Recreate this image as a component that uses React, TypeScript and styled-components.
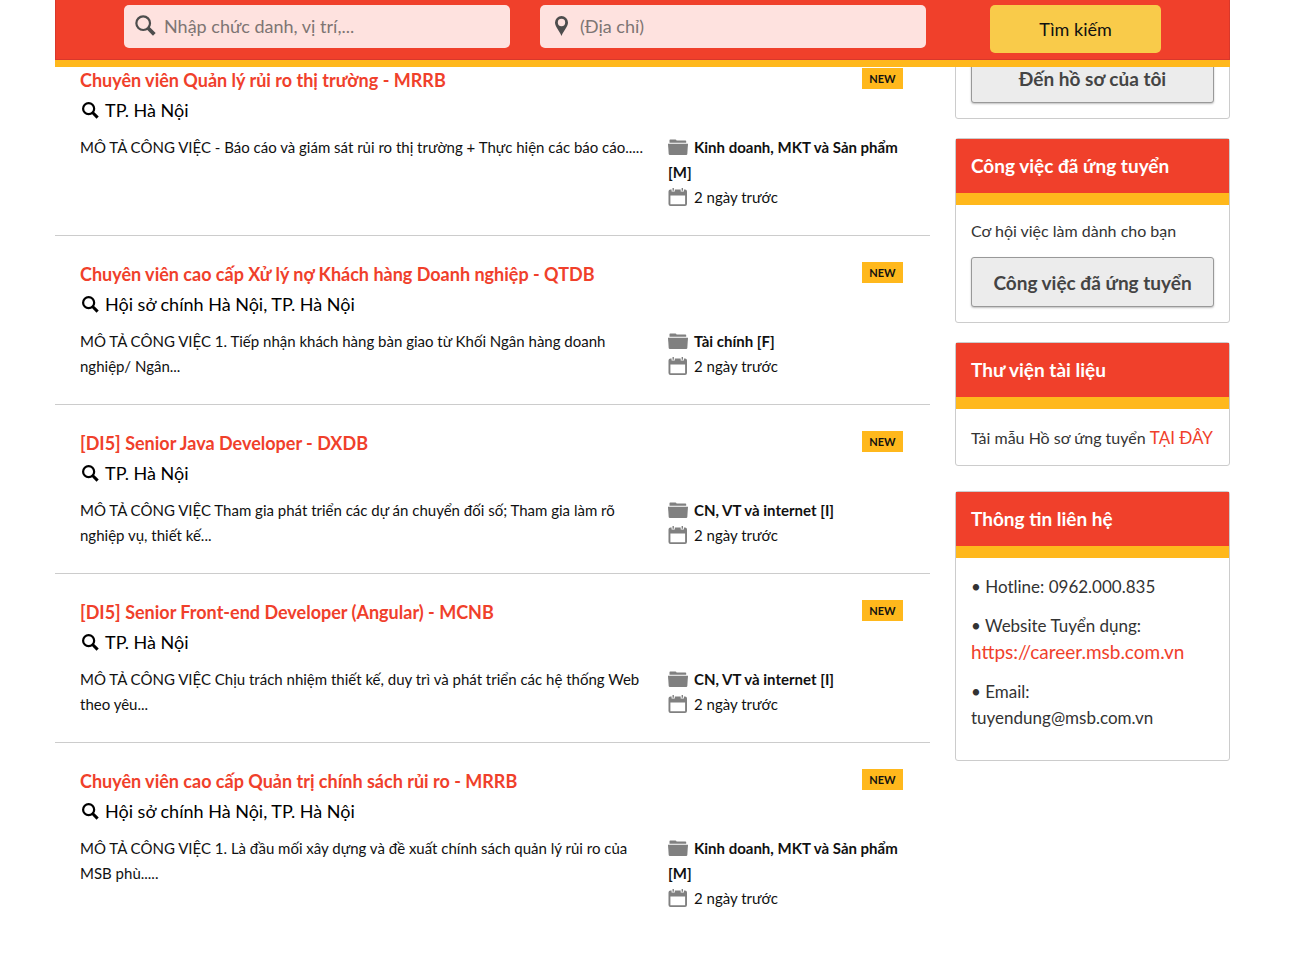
import React from "react";
import styled, { createGlobalStyle } from "styled-components";

const red = "#f0402b";
const amber = "#ffb81c";

const GlobalStyle = createGlobalStyle`
  * { box-sizing: border-box; }
  body {
    margin: 0;
    padding: 0 17px 0 0;
    background: #fff;
    color: #111;
    font-family: Lato, "Noto Sans", sans-serif;
    font-size: 15px;
    line-height: 25px;
  }
  h2, h3, p { margin: 0; padding: 0; font-weight: 400; }
  a { color: ${red}; text-decoration: none; }
`;

const Page = styled.div`
  max-width: 1175px;
  margin: 0 auto;
`;

const SearchBar = styled.form`
  position: sticky;
  top: 0;
  z-index: 2;
  display: grid;
  grid-template-columns: 386px 386px 171px;
  justify-content: start;
  column-gap: 30px;
  height: 67px;
  padding: 5px 69px 0;
  background: ${red};
  border-bottom: 7px solid ${amber};
  box-shadow: inset 0 -1px #d8382a, inset 1px 0 #d8382a, inset -1px 0 #d8382a;
`;

const Field = styled.label`
  display: flex;
  align-items: center;
  height: 43px;
  padding: 0 11px 2px;
  border-radius: 5px;
  background: #fee2df;
  color: #4d4d4d;
`;

const FieldInput = styled.input`
  flex: 1;
  min-width: 0;
  padding: 0;
  margin-left: 8px;
  border: 0;
  outline: 0;
  background: transparent;
  color: #333;
  font: 18px Lato, "Noto Sans", sans-serif;
  &::placeholder { color: #7d7573; opacity: 1; }
`;

const SubmitButton = styled.button`
  height: 48px;
  margin-left: 34px;
  width: 171px;
  border: 0;
  border-radius: 5px;
  background: #f9cb4a;
  color: #111;
  font: 18px Lato, "Noto Sans", sans-serif;
`;

const Columns = styled.div`
  display: grid;
  grid-template-columns: minmax(0, 1fr) 275px;
  column-gap: 25px;
  align-items: start;
  margin-top: -25px;
`;

const JobList = styled.main``;

const JobItem = styled.article`
  display: grid;
  grid-template-columns: minmax(0, 1fr) 235px;
  column-gap: 15px;
  padding: 23px 27px 25px 25px;
  border-bottom: 1px solid #ccc;
  &:last-child { border-bottom: 0; }
`;

const JobHead = styled.div`
  grid-column: 1 / -1;
  display: flex;
  justify-content: space-between;
  align-items: flex-start;
  margin-bottom: 10px;
`;

const JobTitle = styled.h2`
  font-size: 18px;
  font-weight: 700;
  line-height: 30px;
`;

const Place = styled.p`
  display: flex;
  align-items: center;
  gap: 6px;
  padding-left: 2px;
  color: #000;
  font-size: 18px;
  line-height: 30px;
`;

const Badge = styled.span`
  width: 41px;
  margin-top: 3px;
  background: ${amber};
  color: #111;
  font-size: 11px;
  font-weight: 700;
  line-height: 21px;
  text-align: center;
`;

const Summary = styled.p``;

const Meta = styled.div`
  svg { vertical-align: -3px; margin-right: 6px; }
`;

const Sidebar = styled.aside`
  display: flex;
  flex-direction: column;
  gap: 19px;
  margin-top: -3px;
`;

const Card = styled.section<{ $spaced?: boolean }>`
  border: 1px solid #ccc;
  border-radius: 3px;
  margin-top: ${(p) => (p.$spaced ? "6px" : "0")};
`;

const CardTitle = styled.h3`
  padding: 0 15px;
  background: ${red};
  border-bottom: 12px solid ${amber};
  color: #fff;
  font-size: 19px;
  font-weight: 700;
  line-height: 54px;
`;

const CardBody = styled.div`
  display: flex;
  flex-direction: column;
  gap: 14px;
  padding: 13px 15px 15px;
  color: #333;
  font-size: 16px;
  line-height: 25px;
`;

const NoteBody = styled(CardBody)`
  padding: 16px 15px 15px;
  white-space: nowrap;
`;

const ContactBody = styled(CardBody)`
  gap: 13px;
  padding: 16px 15px 29px;
  font-size: 17px;
  line-height: 26px;
`;

const DownloadLink = styled.a`
  font-size: 17px;
`;

const SiteLink = styled.a`
  font-size: 19px;
`;

const CardButton = styled.button`
  height: 50px;
  border: 1px solid #999;
  border-radius: 3px;
  background: #ececec;
  box-shadow: 0 1px 2px rgba(0, 0, 0, 0.25);
  color: #444;
  font: 700 19px Lato, "Noto Sans", sans-serif;
`;

const SearchIcon = ({ size, bold }: { size: number; bold?: boolean }) => (
  <svg width={size} height={size} viewBox="0 0 20 20" fill="none" stroke="currentColor" aria-hidden="true">
    <circle cx="7.800" cy="7.800" r="6.500" strokeWidth={bold ? 2.6 : 2.1} />
    <path d="M12.400 12.400 18.400 18.400" strokeWidth="3.600" />
  </svg>
);

const PinIcon = () => (
  <svg width="21" height="20" viewBox="0 0 21 20" aria-hidden="true">
    <path fill="currentColor" fillRule="evenodd" d="M10.500 0a6.500 6.500 0 0 0-6.500 6.500C4 10.500 8 14 10.500 20 13 14 17 10.500 17 6.500A6.500 6.500 0 0 0 10.500 0zm0 2.800a3.700 3.700 0 1 1 0 7.400 3.700 3.700 0 0 1 0-7.400z" />
  </svg>
);

const FolderIcon = () => (
  <svg width="20" height="17" viewBox="0 0 20 17" fill="#808080" aria-hidden="true">
    <path d="M1.500 3.800V1Q1.500 .4 2.200 .4H7.500Q8.200 .4 8.600 1.400H17.500Q18.200 1.400 18.200 2.100V3.800z" />
    <path d="M0 4.800H20L19.300 15Q19.200 16 18.200 16H1.800Q.8 16 .7 15z" />
  </svg>
);

const CalendarIcon = () => (
  <svg width="20" height="18" viewBox="0 0 20 18" fill="#808080" aria-hidden="true">
    <path fillRule="evenodd" d="M2.500 1.500H3.600V3.600H6.800V1.500H12.700V3.600H15.900V1.500H17Q19 1.500 19 3.500V16Q19 18 17 18H2.500Q.5 18 .5 16V3.500Q.5 1.500 2.500 1.500zM2.400 7.600V16.200H17.100V7.600z" />
    <path d="M4.500 0H5.900V2.700H4.500zM13.600 0H15V2.700H13.600z" />
  </svg>
);

const jobs = [
  { title: "Chuyên viên Quản lý rủi ro thị trường - MRRB", place: "TP. Hà Nội", text: "MÔ TẢ CÔNG VIỆC - Báo cáo và giám sát rủi ro thị trường + Thực hiện các báo cáo.....", field: "Kinh doanh, MKT và Sản phẩm [M]" },
  { title: "Chuyên viên cao cấp Xử lý nợ Khách hàng Doanh nghiệp - QTDB", place: "Hội sở chính Hà Nội, TP. Hà Nội", text: "MÔ TẢ CÔNG VIỆC 1. Tiếp nhận khách hàng bàn giao từ Khối Ngân hàng doanh nghiệp/ Ngân...", field: "Tài chính [F]" },
  { title: "[DI5] Senior Java Developer - DXDB", place: "TP. Hà Nội", text: "MÔ TẢ CÔNG VIỆC Tham gia phát triển các dự án chuyển đối số; Tham gia làm rõ nghiệp vụ, thiết kế...", field: "CN, VT và internet [I]" },
  { title: "[DI5] Senior Front-end Developer (Angular) - MCNB", place: "TP. Hà Nội", text: "MÔ TẢ CÔNG VIỆC Chịu trách nhiệm thiết kế, duy trì và phát triển các hệ thống Web theo yêu...", field: "CN, VT và internet [I]" },
  { title: "Chuyên viên cao cấp Quản trị chính sách rủi ro - MRRB", place: "Hội sở chính Hà Nội, TP. Hà Nội", text: "MÔ TẢ CÔNG VIỆC 1. Là đầu mối xây dựng và đề xuất chính sách quản lý rủi ro của MSB phù.....", field: "Kinh doanh, MKT và Sản phẩm [M]" },
];

export default function App() {
  return (
    <>
      <GlobalStyle />
      <Page>
        <SearchBar onSubmit={(e) => e.preventDefault()}>
          <Field>
            <SearchIcon size={21} />
            <FieldInput aria-label="Chức danh" placeholder="Nhập chức danh, vị trí,..." />
          </Field>
          <Field>
            <PinIcon />
            <FieldInput aria-label="Địa chỉ" placeholder="(Địa chỉ)" />
          </Field>
          <SubmitButton type="submit">Tìm kiếm</SubmitButton>
        </SearchBar>
        <Columns>
          <JobList>
            {jobs.map((job) => (
              <JobItem key={job.title}>
                <JobHead>
                  <div>
                    <JobTitle><a href="#job">{job.title}</a></JobTitle>
                    <Place><SearchIcon size={17} bold />{job.place}</Place>
                  </div>
                  <Badge>NEW</Badge>
                </JobHead>
                <Summary>{job.text}</Summary>
                <Meta>
                  <p><FolderIcon /><b>{job.field}</b></p>
                  <p><CalendarIcon />2 ngày trước</p>
                </Meta>
              </JobItem>
            ))}
          </JobList>
          <Sidebar>
            <Card>
              <CardBody>
                <CardButton type="button">Đến hồ sơ của tôi</CardButton>
              </CardBody>
            </Card>
            <Card>
              <CardTitle>Công việc đã ứng tuyển</CardTitle>
              <CardBody>
                <p>Cơ hội việc làm dành cho bạn</p>
                <CardButton type="button">Công việc đã ứng tuyển</CardButton>
              </CardBody>
            </Card>
            <Card>
              <CardTitle>Thư viện tài liệu</CardTitle>
              <NoteBody>
                <p>Tải mẫu Hồ sơ ứng tuyển <DownloadLink href="#form">TẠI ĐÂY</DownloadLink></p>
              </NoteBody>
            </Card>
            <Card $spaced>
              <CardTitle>Thông tin liên hệ</CardTitle>
              <ContactBody>
                <p>• Hotline: 0962.000.835</p>
                <p>• Website Tuyển dụng:<br /><SiteLink href="https://career.msb.com.vn">https://career.msb.com.vn</SiteLink></p>
                <p>• Email:<br />tuyendung@msb.com.vn</p>
              </ContactBody>
            </Card>
          </Sidebar>
        </Columns>
      </Page>
    </>
  );
}
